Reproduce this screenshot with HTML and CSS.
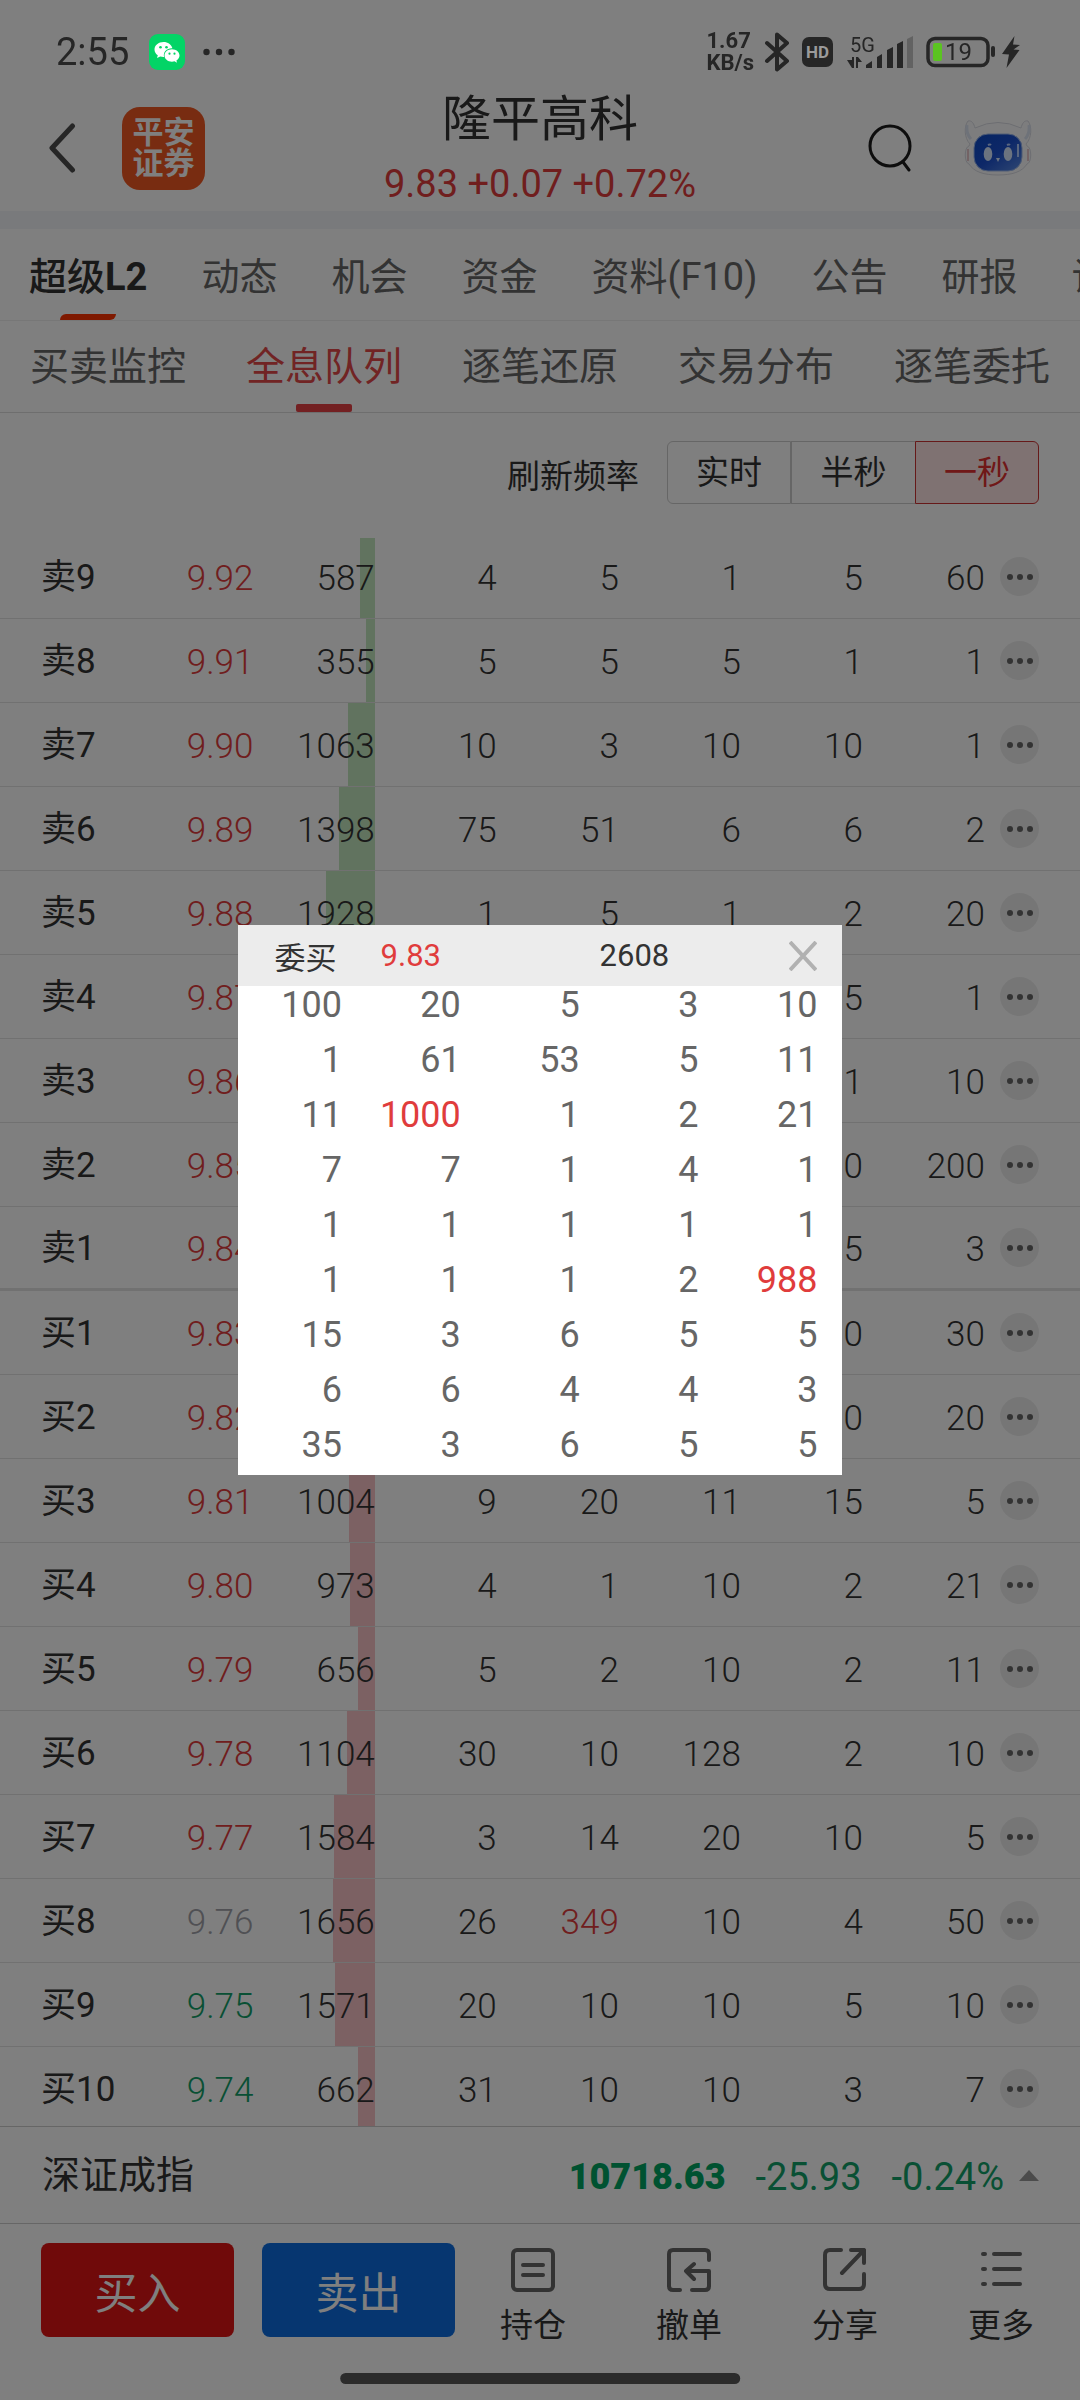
FILE: index.html
```html
<!DOCTYPE html>
<html lang="zh-CN">
<head>
<meta charset="utf-8">
<meta name="viewport" content="width=device-width, initial-scale=1">
<title>隆平高科 - 全息队列</title>
<link rel="stylesheet" href="styles.css">
</head>
<body>
<div class="status">
  <div class="status-group">
    <span class="clock">2:55</span>
    <svg class="wechat" width="36" height="36" viewBox="0 0 36 36" aria-hidden="true"><rect width="36" height="36" rx="9" fill="#03d466"/><path d="M14.500 8C9.500 8 5.500 11.300 5.500 15.500c0 2.400 1.300 4.400 3.300 5.800L8 24l3.200-1.600c1 .3 2.100.5 3.300.5h.6c-1.300-5 3-9 8.300-8.700C22.500 10.600 18.900 8 14.500 8z" fill="#fff"/><path d="M23 15.300c-4.300 0-7.500 2.800-7.500 6.200s3.200 6.200 7.500 6.200c.9 0 1.700-.1 2.500-.4l2.500 1.400-.6-2.300c1.900-1.200 3.100-2.900 3.100-4.900 0-3.400-3.300-6.200-7.500-6.200z" fill="#fff"/><g fill="#03d466"><circle cx="11.500" cy="13.300" r="1.300"/><circle cx="17.500" cy="13.300" r="1.300"/><circle cx="20.500" cy="19.700" r="1.100"/><circle cx="25.500" cy="19.700" r="1.100"/></g></svg>
    <svg width="32" height="8" viewBox="0 0 32 8" fill="#262626" aria-hidden="true"><circle cx="3.500" cy="4" r="3.200"/><circle cx="16" cy="4" r="3.200"/><circle cx="28.500" cy="4" r="3.200"/></svg>
  </div>
  <div class="status-group status-right">
    <span class="rate">1.67<br>KB/s</span>
    <svg class="bt" width="26" height="40" viewBox="0 0 26 40" fill="none" stroke="#262626" stroke-width="4" stroke-linejoin="round" stroke-linecap="round" aria-hidden="true"><path d="M3 11l20 18-10 8.500V2.500L23 11 3 29"/></svg>
    <span class="hd">HD</span>
    <svg class="signal" width="68" height="34" viewBox="0 0 68 34" aria-hidden="true"><text x="4" y="17" class="net">5G</text><path d="M1 25h5V22h2v11H6zM10 33V22h2l4 5h-4v6z" fill="#262626"/><g fill="#262626"><path d="M20 33v-3l6-4v7z"/><path d="M31 33V22l5-3v14z"/><path d="M41 33V15l6-3v21z"/><path d="M51 33V9l6-3v27z"/></g><path d="M61 33V4l6-3v32z" fill="#626262"/></svg>
    <svg class="battery" width="70" height="32" viewBox="0 0 70 32" aria-hidden="true"><rect x="2" y="2.500" width="60" height="27" rx="7" fill="none" stroke="#262626" stroke-width="3.500"/><rect x="7" y="7" width="9" height="18" rx="2" fill="#5bc421"/><rect x="65" y="10" width="4" height="11" rx="2" fill="#262626"/><text x="19" y="24" class="level">19</text></svg>
    <svg width="18" height="32" viewBox="0 0 18 32" fill="#262626" aria-hidden="true"><path d="M12.500 0L0 18l7 .5L4.500 32 17.500 14l-6-.5L18 9l-7-.5z"/></svg>
  </div>
</div>

<div class="app">
  <header class="head">
    <div class="head-side">
      <button class="plain" type="button" aria-label="返回"><svg width="28" height="50" viewBox="0 0 28 50" fill="none" stroke="#4c4c4c" stroke-width="5" stroke-linecap="round" stroke-linejoin="round"><path d="M24.500 3L4 25l20.500 22"/></svg></button>
      <span class="brand">平安<br>证券</span>
    </div>
    <div class="head-title">
      <h1>隆平高科</h1>
      <p class="up">9.83 +0.07 +0.72%</p>
    </div>
    <div class="head-side head-right">
      <button class="plain" type="button" aria-label="搜索"><svg width="44" height="48" viewBox="0 0 44 48" fill="none" stroke="#1a1a1a" stroke-width="3" stroke-linecap="round"><circle cx="22" cy="22" r="20"/><path d="M35 38l6 8"/></svg></button>
      <button class="plain robot" type="button" aria-label="智能助手"><svg width="68" height="56" viewBox="0 0 68 56"><defs><linearGradient id="face" x1="0" y1="0" x2="1" y2="1"><stop offset="0" stop-color="#0c49c4"/><stop offset=".5" stop-color="#1b50d0"/><stop offset="1" stop-color="#5f8fe6"/></linearGradient></defs><path d="M6 24C0 18 0 6 4 1c4-1 6 3 7 7q23-11 46 0c1-4 3-8 7-7 4 5 4 17-2 23l1 2c5 1 5 17 0 18C58 52 48 55 34 55S10 52 5 44c-5-1-5-17 0-18z" fill="#fbfbfd" stroke="#d9dbe3"/><path d="M3 5q-1 9 4 14M65 5q1 9-4 14" fill="none" stroke="#dde4f2" stroke-width="3"/><path d="M4 29v12M64 29v12" stroke="#e6c6cb" stroke-width="2"/><rect x="10" y="14" width="48" height="37" rx="14" fill="url(#face)" stroke="#9db8ea" stroke-width="1"/><g fill="#d6e7ff"><ellipse cx="24" cy="34" rx="4.300" ry="7"/><ellipse cx="44" cy="34" rx="4.300" ry="7"/><path d="M32 38h4l-2 4z"/></g><path d="M24 25q2-1 3 0M43 25q2-1 3 0M54 24v13" fill="none" stroke="#b2ccff" stroke-width="2"/></svg></button>
    </div>
  </header>

  <nav class="tabs tabs-main" aria-label="栏目">
    <a class="on" href="#">超级<b>L2</b></a><a href="#">动态</a><a href="#">机会</a><a href="#">资金</a><a href="#">资料(F10)</a><a href="#">公告</a><a href="#">研报</a><a href="#">诊股</a>
  </nav>
  <nav class="tabs tabs-sub" aria-label="超级L2">
    <a href="#">买卖监控</a><a class="on" href="#">全息队列</a><a href="#">逐笔还原</a><a href="#">交易分布</a><a href="#">逐笔委托</a>
  </nav>

  <div class="filter">
    <span class="filter-label" id="freq">刷新频率</span>
    <div class="segments" role="group" aria-labelledby="freq">
      <button type="button">实时</button><button type="button">半秒</button><button class="on" type="button" aria-pressed="true">一秒</button>
    </div>
  </div>

  <main class="depth">
    <table class="depth-table">
      <colgroup><col class="c-name"><col class="c-price"><col class="c-num"><col class="c-num"><col class="c-num"><col class="c-num"><col class="c-num"><col class="c-num"><col class="c-more"></colgroup>
      <tbody class="sell">
        <tr><th scope="row">卖9</th><td class="price up">9.92</td><td><i class="bar" style="width:12.3%"></i>587</td><td>4</td><td>5</td><td>1</td><td>5</td><td>60</td><td><button class="more" type="button" aria-label="更多卖9"><i></i><i></i><i></i></button></td></tr>
        <tr><th scope="row">卖8</th><td class="price up">9.91</td><td><i class="bar" style="width:7.4%"></i>355</td><td>5</td><td>5</td><td>5</td><td>1</td><td>1</td><td><button class="more" type="button" aria-label="更多卖8"><i></i><i></i><i></i></button></td></tr>
        <tr><th scope="row">卖7</th><td class="price up">9.90</td><td><i class="bar" style="width:22.2%"></i>1063</td><td>10</td><td>3</td><td>10</td><td>10</td><td>1</td><td><button class="more" type="button" aria-label="更多卖7"><i></i><i></i><i></i></button></td></tr>
        <tr><th scope="row">卖6</th><td class="price up">9.89</td><td><i class="bar" style="width:29.2%"></i>1398</td><td>75</td><td>51</td><td>6</td><td>6</td><td>2</td><td><button class="more" type="button" aria-label="更多卖6"><i></i><i></i><i></i></button></td></tr>
        <tr><th scope="row">卖5</th><td class="price up">9.88</td><td><i class="bar" style="width:40.3%"></i>1928</td><td>1</td><td>5</td><td>1</td><td>2</td><td>20</td><td><button class="more" type="button" aria-label="更多卖5"><i></i><i></i><i></i></button></td></tr>
        <tr><th scope="row">卖4</th><td class="price up">9.87</td><td></td><td></td><td></td><td></td><td>5</td><td>1</td><td><button class="more" type="button" aria-label="更多卖4"><i></i><i></i><i></i></button></td></tr>
        <tr><th scope="row">卖3</th><td class="price up">9.86</td><td></td><td></td><td></td><td></td><td>1</td><td>10</td><td><button class="more" type="button" aria-label="更多卖3"><i></i><i></i><i></i></button></td></tr>
        <tr><th scope="row">卖2</th><td class="price up">9.85</td><td></td><td></td><td></td><td></td><td>10</td><td>200</td><td><button class="more" type="button" aria-label="更多卖2"><i></i><i></i><i></i></button></td></tr>
        <tr><th scope="row">卖1</th><td class="price up">9.84</td><td></td><td></td><td></td><td></td><td>5</td><td>3</td><td><button class="more" type="button" aria-label="更多卖1"><i></i><i></i><i></i></button></td></tr>
      </tbody>
      <tbody class="buy">
        <tr><th scope="row">买1</th><td class="price up">9.83</td><td></td><td></td><td></td><td></td><td>10</td><td>30</td><td><button class="more" type="button" aria-label="更多买1"><i></i><i></i><i></i></button></td></tr>
        <tr><th scope="row">买2</th><td class="price up">9.82</td><td></td><td></td><td></td><td></td><td>10</td><td>20</td><td><button class="more" type="button" aria-label="更多买2"><i></i><i></i><i></i></button></td></tr>
        <tr><th scope="row">买3</th><td class="price up">9.81</td><td><i class="bar" style="width:21%"></i>1004</td><td>9</td><td>20</td><td>11</td><td>15</td><td>5</td><td><button class="more" type="button" aria-label="更多买3"><i></i><i></i><i></i></button></td></tr>
        <tr><th scope="row">买4</th><td class="price up">9.80</td><td><i class="bar" style="width:20.3%"></i>973</td><td>4</td><td>1</td><td>10</td><td>2</td><td>21</td><td><button class="more" type="button" aria-label="更多买4"><i></i><i></i><i></i></button></td></tr>
        <tr><th scope="row">买5</th><td class="price up">9.79</td><td><i class="bar" style="width:13.7%"></i>656</td><td>5</td><td>2</td><td>10</td><td>2</td><td>11</td><td><button class="more" type="button" aria-label="更多买5"><i></i><i></i><i></i></button></td></tr>
        <tr><th scope="row">买6</th><td class="price up">9.78</td><td><i class="bar" style="width:23.1%"></i>1104</td><td>30</td><td>10</td><td>128</td><td>2</td><td>10</td><td><button class="more" type="button" aria-label="更多买6"><i></i><i></i><i></i></button></td></tr>
        <tr><th scope="row">买7</th><td class="price up">9.77</td><td><i class="bar" style="width:33.1%"></i>1584</td><td>3</td><td>14</td><td>20</td><td>10</td><td>5</td><td><button class="more" type="button" aria-label="更多买7"><i></i><i></i><i></i></button></td></tr>
        <tr><th scope="row">买8</th><td class="price flat">9.76</td><td><i class="bar" style="width:34.6%"></i>1656</td><td>26</td><td class="up">349</td><td>10</td><td>4</td><td>50</td><td><button class="more" type="button" aria-label="更多买8"><i></i><i></i><i></i></button></td></tr>
        <tr><th scope="row">买9</th><td class="price down">9.75</td><td><i class="bar" style="width:32.8%"></i>1571</td><td>20</td><td>10</td><td>10</td><td>5</td><td>10</td><td><button class="more" type="button" aria-label="更多买9"><i></i><i></i><i></i></button></td></tr>
        <tr><th scope="row">买10</th><td class="price down">9.74</td><td><i class="bar" style="width:13.8%"></i>662</td><td>31</td><td>10</td><td>10</td><td>3</td><td>7</td><td><button class="more" type="button" aria-label="更多买10"><i></i><i></i><i></i></button></td></tr>
      </tbody>
    </table>
  </main>

  <section class="index" aria-label="指数">
    <span class="index-name">深证成指</span>
    <b class="down">10718.63</b>
    <span class="down">-25.93</span>
    <span class="down">-0.24%</span>
    <i class="caret"></i>
  </section>

  <footer class="actions">
    <button class="trade trade-buy" type="button">买入</button>
    <button class="trade trade-sell" type="button">卖出</button>
    <div class="tools">
      <a href="#"><svg width="44" height="44" viewBox="0 0 44 44"><rect x="2" y="2" width="40" height="40" rx="4"/><path d="M12 17h20M12 27h20"/></svg>持仓</a>
      <a href="#"><svg width="44" height="44" viewBox="0 0 44 44"><path d="M42 12V6q0-4-4-4H6Q2 2 2 6v32q0 4 4 4h7M25 42h13q4 0 4-4V23H20M27 16l-8 7 8 8"/></svg>撤单</a>
      <a href="#"><svg width="44" height="44" viewBox="0 0 44 44"><path d="M18 2H7Q2 2 2 7v29q0 5 5 5h29q5 0 5-5V26M28 2h13v13M41 2L19 25"/></svg>分享</a>
      <a href="#"><svg width="44" height="44" viewBox="0 0 44 44"><path d="M4 6h2M15 6h26M4 21h2M15 21h26M4 36h2M15 36h26"/></svg>更多</a>
    </div>
  </footer>
</div>

<div class="scrim">
  <div class="popup" role="dialog" aria-label="委买队列">
    <div class="popup-head">
      <span>委买</span><span class="up">9.83</span><span>2608</span>
      <button class="plain" type="button" aria-label="关闭"><svg width="28" height="30" viewBox="0 0 28 30" stroke="#b1b1b1" stroke-width="4" fill="none"><path d="M1 1l26 28M27 1L1 29"/></svg></button>
    </div>
    <div class="popup-body">
      <table class="queue">
        <colgroup><col class="q-first"><col span="4"></colgroup>
        <tbody>
          <tr><td>100</td><td>20</td><td>5</td><td>3</td><td>10</td></tr>
          <tr><td>1</td><td>61</td><td>53</td><td>5</td><td>11</td></tr>
          <tr><td>11</td><td class="up">1000</td><td>1</td><td>2</td><td>21</td></tr>
          <tr><td>7</td><td>7</td><td>1</td><td>4</td><td>1</td></tr>
          <tr><td>1</td><td>1</td><td>1</td><td>1</td><td>1</td></tr>
          <tr><td>1</td><td>1</td><td>1</td><td>2</td><td class="up">988</td></tr>
          <tr><td>15</td><td>3</td><td>6</td><td>5</td><td>5</td></tr>
          <tr><td>6</td><td>6</td><td>4</td><td>4</td><td>3</td></tr>
          <tr><td>35</td><td>3</td><td>6</td><td>5</td><td>5</td></tr>
        </tbody>
      </table>
    </div>
  </div>
</div>
<div class="home-bar"></div>
</body>
</html>
```

FILE: styles.css
```css
* { box-sizing: border-box; }

body {
  margin: 0;
  background: #fff;
  color: #333;
  font-family: Roboto, "Noto Sans CJK SC", sans-serif;
}

button { font: inherit; color: inherit; padding: 0; border: 0; cursor: pointer; }
a { color: inherit; text-decoration: none; }
.plain { display: block; background: none; }
.plain svg { display: block; }

.up { color: #e03c3c; }
.down { color: #12a069; }
.flat { color: #a0a1a8; }

/* System status bar, stays above the dialog scrim */
.status {
  position: fixed;
  inset: 0 0 auto;
  z-index: 3;
  height: 84px;
  padding: 20px 60px 0 56px;
  display: flex;
  justify-content: space-between;
  color: #262626;
}
.status-group { display: flex; align-items: center; height: 64px; }
.clock { font-size: 38px; }
.wechat { margin: 0 18px 0 20px; }
.rate { font-size: 22px; font-weight: 700; line-height: 22px; }
.bt { margin: 0 12px 0 10px; }
.hd {
  width: 31px;
  height: 30px;
  border-radius: 7px;
  background: #262626;
  color: #9a9a9a;
  font-size: 17px;
  font-weight: 700;
  line-height: 30px;
  text-align: center;
}
.signal { margin: 0 12px 0 13px; overflow: visible; }
.battery { margin-right: 6px; }
.net { font-size: 20px; fill: #262626; }
.level { font-size: 24px; fill: #262626; }

.app {
  height: 100vh;
  padding-top: 84px;
  display: flex;
  flex-direction: column;
}

.head {
  height: 127px;
  padding: 0 48px;
  display: grid;
  grid-template-columns: 1fr auto 1fr;
  align-items: center;
  flex: none;
}
.head-side { display: flex; align-items: center; gap: 46px; }
.head-right { justify-content: flex-end; gap: 52px; }
.brand {
  width: 83px;
  height: 83px;
  padding-top: 10px;
  border-radius: 18px;
  background: #f15822;
  color: #fff;
  font-size: 31px;
  font-weight: 700;
  line-height: 31px;
  text-align: center;
}
.head-title { text-align: center; }
.head-title h1 { margin: 0; font-size: 49px; font-weight: 400; line-height: 72px; }
.head-title p { margin: 0; font-size: 38px; line-height: 56px; }

.tabs {
  display: flex;
  flex: none;
  height: 92px;
  overflow: hidden;
  white-space: nowrap;
  color: #666;
  line-height: 92px;
  border-bottom: 1px solid #eee;
}
.tabs a { position: relative; flex: none; height: 91px; }
.tabs .on::after {
  content: "";
  position: absolute;
  left: 50%;
  bottom: 0;
  width: 56px;
  margin-left: -28px;
}
.tabs-main {
  height: 110px;
  padding-left: 29px;
  gap: 54px;
  font-size: 38px;
  line-height: 96px;
  border-top: 18px solid #f2f4f8;
}
.tabs-main .on { color: #333; font-weight: 500; }
.tabs-main .on::after { height: 6px; border-radius: 6px 0; background: #ff3300; }
.tabs-sub { padding-left: 30px; gap: 60px; font-size: 39px; border-color: #ddd; }
.tabs-sub .on { color: #e24848; }
.tabs-sub .on::after { height: 8px; border-radius: 2px; background: #e64045; }

.filter {
  height: 125px;
  padding: 28px 41px 0;
  display: flex;
  justify-content: flex-end;
  align-items: flex-start;
  gap: 28px;
  flex: none;
  font-size: 33px;
  line-height: 61px;
}
.filter-label { padding-top: 5px; }
.segments { display: flex; }
.segments button {
  width: 124px;
  height: 63px;
  background: #fff;
  border: 1px solid #ccc;
}
.segments button:first-child { border-radius: 6px 0 0 6px; }
.segments button:nth-child(2) { border-right: 0; }
.segments .on {
  border-color: #c33;
  border-radius: 0 6px 6px 0;
  background: #ffe5e5;
  color: #e03030;
}

.depth { flex: 1 1 0; min-height: 0; overflow: hidden; }
.depth-table {
  width: 100%;
  margin-top: -3px;
  table-layout: fixed;
  border-spacing: 0;
  font-size: 35px;
  line-height: 44px;
}
.c-name { width: 17.3%; }
.c-price { width: 6.1%; }
.c-num { width: 11.3%; }
.c-more { width: 8.8%; }
.depth-table th,
.depth-table td {
  position: relative;
  height: 84px;
  padding: 5px 0 0;
  border-bottom: 1px solid #e2e2e2;
  text-align: right;
  font-weight: 300;
  white-space: nowrap;
}
.depth-table th { padding: 3px 0 0 41px; text-align: left; font-weight: 400; }
.depth-table td:last-child { padding-top: 0; }
.depth-table .price { text-align: left; }
.sell tr:last-child > * { border-bottom-width: 3px; }
.bar { position: absolute; top: 0; right: 0; bottom: 0; z-index: -1; }
.sell .bar { background: #c2e6be; }
.buy .bar { background: #f8c2c6; }
.more {
  width: 39px;
  height: 39px;
  margin: 0 41px 0 auto;
  border-radius: 50%;
  background: #ededed;
  display: flex;
  align-items: center;
  justify-content: center;
  gap: 4px;
}
.more i { width: 6px; height: 6px; border-radius: 50%; background: #666; }

.index {
  height: 97px;
  padding: 0 41px 0 42px;
  display: flex;
  align-items: center;
  flex: none;
  gap: 30px;
  border-top: 1px solid #ccc;
  font-size: 38px;
  line-height: 48px;
}
.index-name { margin-right: auto; }
.index .down { padding-top: 4px; }
.index b { font-size: 36px; font-weight: 900; color: #00a562; }
.caret {
  margin-left: -15px;
  border: 10px solid transparent;
  border-top: 0;
  border-bottom: 11px solid #999;
}

.actions {
  height: 177px;
  padding: 19px 1px 0 41px;
  display: flex;
  align-items: flex-start;
  flex: none;
  border-top: 1px solid #ccc;
}
.trade {
  width: 193px;
  height: 94px;
  border-radius: 8px;
  color: #fff;
  font-size: 43px;
}
.trade-buy { margin-right: 28px; background: #e01414; }
.trade-sell { background: #0d6de0; }
.tools { flex: 1; display: grid; grid-template-columns: repeat(4, 1fr); }
.tools a {
  display: flex;
  flex-direction: column;
  align-items: center;
  gap: 10px;
  padding-top: 5px;
  font-size: 33px;
  line-height: 48px;
}
.tools svg { fill: none; stroke: #666; stroke-width: 4; stroke-linecap: round; stroke-linejoin: round; }

.scrim {
  position: fixed;
  inset: 0;
  z-index: 2;
  display: flex;
  align-items: center;
  justify-content: center;
  background: rgba(0, 0, 0, .5);
}
.popup { width: 56%; background: #fff; }
.popup-head {
  position: relative;
  z-index: 1;
  height: 61px;
  padding: 0 25px 0 37px;
  display: grid;
  grid-template-columns: 106px 219px 1fr auto;
  align-items: center;
  background: #ececec;
  font-size: 31px;
}
.popup-body { padding: 0 25px 2px 0; overflow: hidden; }
.queue {
  width: 100%;
  margin-top: -8px;
  table-layout: fixed;
  border-spacing: 0;
  color: #666;
  font-size: 36px;
  line-height: 55px;
  text-align: right;
}
.q-first { width: 18%; }
.queue td { padding: 0; }

.home-bar {
  position: fixed;
  left: 50%;
  bottom: 16px;
  z-index: 3;
  width: 37%;
  height: 11px;
  border-radius: 6px;
  background: #2c2c2c;
  transform: translateX(-50%);
}
```
